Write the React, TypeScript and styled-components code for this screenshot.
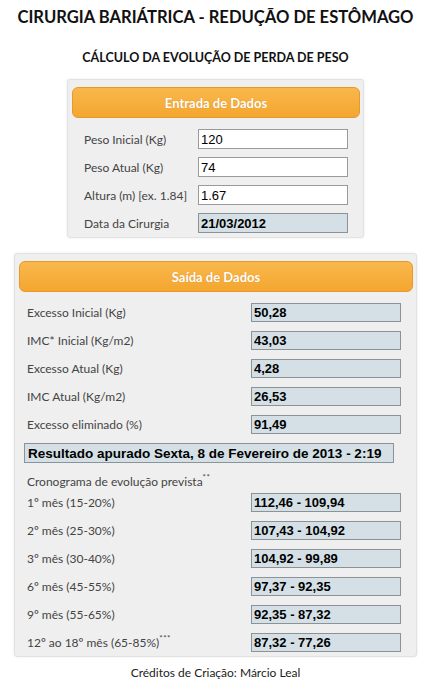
import React from 'react'
import styled, { createGlobalStyle } from 'styled-components'

const GlobalStyle = createGlobalStyle`
  body {
    margin: 0;
    background: #ffffff;
    font-family: Lato, "Open Sans", sans-serif;
  }
`

const Page = styled.div`
  width: 439px;
  display: flex;
  flex-direction: column;
  align-items: center;
  padding-right: 8px;
  box-sizing: border-box;
`

const Title = styled.h1`
  margin: 7px 0 0 0;
  font-size: 16.6px;
  font-weight: 700;
  color: #111;
`

const Subtitle = styled.h2`
  margin: 23px 0 0 0;
  font-size: 12.5px;
  font-weight: 700;
  color: #111;
`

const Panel = styled.section<{ $width: number; $top: number }>`
  width: ${p => p.$width}px;
  margin-top: ${p => p.$top}px;
  box-sizing: border-box;
  background: #efefef;
  border: 1px solid #e2e2e2;
  border-radius: 3px;
  box-shadow: 0 0 3px rgba(0, 0, 0, 0.08);
  padding: 7px 3px 4px 4px;
`

const Header = styled.div`
  height: 31px;
  box-sizing: border-box;
  display: flex;
  align-items: center;
  justify-content: center;
  background: linear-gradient(#f9b84c, #f4a630);
  border: 1px solid #e69a2c;
  border-radius: 6px;
  color: #fff;
  font-weight: 700;
  font-size: 13px;
  text-shadow: 0 0 1px rgba(160, 90, 0, 0.4);
`

const Rows = styled.div<{ $label: number; $left: number; $top: number; $gap: number }>`
  display: grid;
  grid-template-columns: ${p => p.$label}px auto;
  row-gap: ${p => p.$gap}px;
  align-items: center;
  padding-left: ${p => p.$left}px;
  margin-top: ${p => p.$top}px;
`

const Label = styled.span`
  font-size: 12px;
  color: #444;
  white-space: nowrap;
`

const Sup = styled.sup`
  font-size: 8px;
  letter-spacing: 0.5px;
  vertical-align: 6px;
  line-height: 0;
`

const Field = styled.div<{ $readOnly?: boolean; $h: number }>`
  width: 150px;
  height: ${p => p.$h}px;
  box-sizing: border-box;
  border: 1px solid ${p => (p.$readOnly ? '#8c9396' : '#9a9a9a')};
  background: ${p => (p.$readOnly ? '#d4e0e6' : '#ffffff')};
  font-family: "Liberation Sans", Arial, sans-serif;
  font-size: 13px;
  font-weight: ${p => (p.$readOnly ? 700 : 400)};
  color: #000;
  display: flex;
  align-items: center;
  padding-left: 2px;
`

const Result = styled.div`
  grid-column: 1 / 3;
  margin-left: -3px;
  width: 370px;
  height: 20px;
  box-sizing: border-box;
  border: 1px solid #8c9396;
  background: #d4e0e6;
  font-family: "Liberation Sans", Arial, sans-serif;
  font-size: 13.5px;
  font-weight: 700;
  color: #000;
  display: flex;
  align-items: center;
  padding-left: 3px;
`

const Schedule = styled.span`
  grid-column: 1 / 3;
  font-size: 12px;
  line-height: 12px;
  height: 12px;
  margin-top: 4px;
  margin-bottom: -4px;
  color: #444;
`

const Credits = styled.p`
  margin: 8px 0 0 0;
  font-size: 12px;
  color: #222;
`

const entradas = [
  { label: 'Peso Inicial (Kg)', value: '120' },
  { label: 'Peso Atual (Kg)', value: '74' },
  { label: 'Altura (m) [ex. 1.84]', value: '1.67' },
]

const saidas = [
  { label: 'Excesso Inicial (Kg)', value: '50,28' },
  { label: 'IMC* Inicial (Kg/m2)', value: '43,03' },
  { label: 'Excesso Atual (Kg)', value: '4,28' },
  { label: 'IMC Atual (Kg/m2)', value: '26,53' },
  { label: 'Excesso eliminado (%)', value: '91,49' },
]

const cronograma = [
  { label: '1º mês (15-20%)', value: '112,46 - 109,94' },
  { label: '2º mês (25-30%)', value: '107,43 - 104,92' },
  { label: '3º mês (30-40%)', value: '104,92 - 99,89' },
  { label: '6º mês (45-55%)', value: '97,37 - 92,35' },
  { label: '9º mês (55-65%)', value: '92,35 - 87,32' },
]

function App() {
  return (
    <Page>
      <GlobalStyle />
      <Title>CIRURGIA BARIÁTRICA - REDUÇÃO DE ESTÔMAGO</Title>
      <Subtitle>CÁLCULO DA EVOLUÇÃO DE PERDA DE PESO</Subtitle>

      <Panel $width={297} $top={14}>
        <Header>Entrada de Dados</Header>
        <Rows $label={114} $left={12} $top={11} $gap={8}>
          {entradas.map(e => (
            <React.Fragment key={e.label}>
              <Label>{e.label}</Label>
              <Field $h={20}>{e.value}</Field>
            </React.Fragment>
          ))}
          <Label>Data da Cirurgia</Label>
          <Field $h={20} $readOnly>21/03/2012</Field>
        </Rows>
      </Panel>

      <Panel $width={403} $top={15}>
        <Header>Saída de Dados</Header>
        <Rows $label={224} $left={8} $top={11} $gap={9}>
          {saidas.map(s => (
            <React.Fragment key={s.label}>
              <Label>{s.label}</Label>
              <Field $h={19} $readOnly>{s.value}</Field>
            </React.Fragment>
          ))}
          <Result>Resultado apurado Sexta, 8 de Fevereiro de 2013 - 2:19</Result>
          <Schedule>Cronograma de evolução prevista<Sup>**</Sup></Schedule>
          {cronograma.map(c => (
            <React.Fragment key={c.label}>
              <Label>{c.label}</Label>
              <Field $h={19} $readOnly>{c.value}</Field>
            </React.Fragment>
          ))}
          <Label>12º ao 18º mês (65-85%)<Sup>***</Sup></Label>
          <Field $h={19} $readOnly>87,32 - 77,26</Field>
        </Rows>
      </Panel>

      <Credits>Créditos de Criação: Márcio Leal</Credits>
    </Page>
  )
}

export default App
